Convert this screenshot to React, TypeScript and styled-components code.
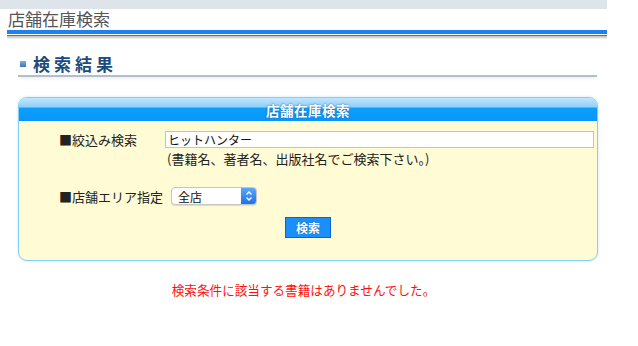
import { createGlobalStyle, styled } from "styled-components";

const GlobalStyle = createGlobalStyle`
  body {
    margin: 0;
    background: #fff;
    font-family: "Noto Sans CJK JP", "Liberation Sans", sans-serif;
    color: #222;
  }
`;

const Page = styled.div`
  width: 607px;
`;

const TopBar = styled.div`
  height: 9px;
  background-color: #dde4ea;
`;

const PageTitle = styled.h1`
  margin: 0;
  padding-left: 8px;
  height: 21px;
  font-size: 17px;
  font-weight: normal;
  line-height: 20px;
  color: #555;
`;

const TitleRule = styled.div`
  margin-left: 7px;
  height: 4px;
  background-color: #1f80f2;
  border-bottom: 1px solid #fff;
  box-shadow: 0 1px 0 #1f80f2, 0 2px 0 #c4c6c8, 0 3px 0 #d6d8da, 0 4px 0 #ececec;
`;

const SectionHead = styled.h2`
  margin: 19px 10px 0 18px;
  padding: 0 0 2px 2px;
  display: flex;
  align-items: center;
  gap: 7px;
  font-size: 17px;
  font-weight: bold;
  letter-spacing: 4px;
  line-height: 19px;
  color: #1b4c7e;
  border-bottom: 2px solid #b4bec8;
  box-shadow: 0 3px 3px -1px #eef1f4;
`;

const Bullet = styled.span`
  width: 6px;
  height: 6px;
  background: linear-gradient(#7fb2e6, #3b72bb);
`;

const Panel = styled.section`
  margin: 20px 9px 0 18px;
  border: 1px solid #84cff4;
  border-radius: 9px;
  overflow: hidden;
  background-color: #fffbd5;
  box-shadow: 0 0 3px #c3e6fb;
`;

const PanelHeader = styled.div`
  height: 23px;
  background: linear-gradient(#c2e5fc 0px, #90d0fa 9px, #0aa0ff 10px, #0a96fa 23px);
  color: #fff;
  font-size: 13.5px;
  font-weight: bold;
  letter-spacing: 0.5px;
  line-height: 25px;
  text-align: center;
  text-shadow: 0 0 2px #1d5f9a;
`;

const PanelBody = styled.div`
  padding: 10px 3px 22px 40px;
  display: flex;
  flex-direction: column;
`;

const Row = styled.div<{ $top?: number; $center?: boolean }>`
  display: flex;
  align-items: ${(p) => (p.$center ? "center" : "flex-start")};
  margin-top: ${(p) => p.$top ?? 0}px;
`;

const Label = styled.div<{ $fit?: boolean }>`
  width: ${(p) => (p.$fit ? "auto" : "106px")};
  flex-shrink: 0;
  font-size: 13px;
  line-height: 17px;
  color: #222;
`;

const Field = styled.div`
  flex: 1;
  display: flex;
  flex-direction: column;
`;

const TextInput = styled.input`
  box-sizing: border-box;
  width: 100%;
  height: 17px;
  margin: 0;
  padding: 0 2px;
  border: 1px solid #c3c3c3;
  background: #fff;
  font-family: "Noto Sans CJK JP", sans-serif;
  font-size: 12px;
  color: #111;
  outline: none;
`;

const Hint = styled.div`
  margin-top: 1px;
  padding-left: 2px;
  font-size: 13px;
  line-height: 19px;
  color: #222;
`;

const SelectBox = styled.div`
  margin-left: 8px;
  width: 86px;
  height: 18px;
  box-sizing: border-box;
  display: flex;
  border: 1px solid #c6c6c6;
  border-radius: 4px;
  overflow: hidden;
  background: #fff;
  box-shadow: 0 1px 1px rgba(0, 0, 0, 0.12);
`;

const SelectText = styled.span`
  flex: 1;
  padding-left: 6px;
  font-size: 12px;
  line-height: 17px;
  color: #111;
`;

const Stepper = styled.span`
  width: 15px;
  display: flex;
  align-items: center;
  justify-content: center;
  background: linear-gradient(#5aa8fa, #1d72ea);
`;

const ButtonRow = styled.div`
  display: flex;
  justify-content: center;
  margin: 12px 0 0 -37px;
`;

const SearchButton = styled.button`
  width: 46px;
  height: 21px;
  padding: 0;
  border: 1px solid #0b66cc;
  background-color: #1a8ef9;
  color: #fff;
  font-family: "Noto Sans CJK JP", sans-serif;
  font-size: 12px;
  font-weight: bold;
  text-shadow: 0 0 1px #0b4d99;
  cursor: pointer;
`;

const Message = styled.p`
  margin: 20px 0 0;
  text-align: center;
  font-size: 12.6px;
  line-height: 18px;
  color: #ff1010;
`;

const App = () => {
  return (
    <Page>
      <GlobalStyle />
      <TopBar />
      <PageTitle>店舗在庫検索</PageTitle>
      <TitleRule />
      <SectionHead>
        <Bullet />
        検索結果
      </SectionHead>
      <Panel>
        <PanelHeader>店舗在庫検索</PanelHeader>
        <PanelBody>
          <Row>
            <Label>■絞込み検索</Label>
            <Field>
              <TextInput defaultValue="ヒットハンター" />
              <Hint>(書籍名、著者名、出版社名でご検索下さい。)</Hint>
            </Field>
          </Row>
          <Row $top={19} $center>
            <Label $fit>■店舗エリア指定</Label>
            <SelectBox>
              <SelectText>全店</SelectText>
              <Stepper>
                <svg width="8" height="12" viewBox="0 0 8 12">
                  <path
                    d="M1.5 4.5 L4 2 L6.5 4.5 M1.5 7.5 L4 10 L6.5 7.5"
                    fill="none"
                    stroke="#fff"
                    strokeWidth="1.4"
                  />
                </svg>
              </Stepper>
            </SelectBox>
          </Row>
          <ButtonRow>
            <SearchButton>検索</SearchButton>
          </ButtonRow>
        </PanelBody>
      </Panel>
      <Message>検索条件に該当する書籍はありませんでした。</Message>
    </Page>
  );
};

export default App;
